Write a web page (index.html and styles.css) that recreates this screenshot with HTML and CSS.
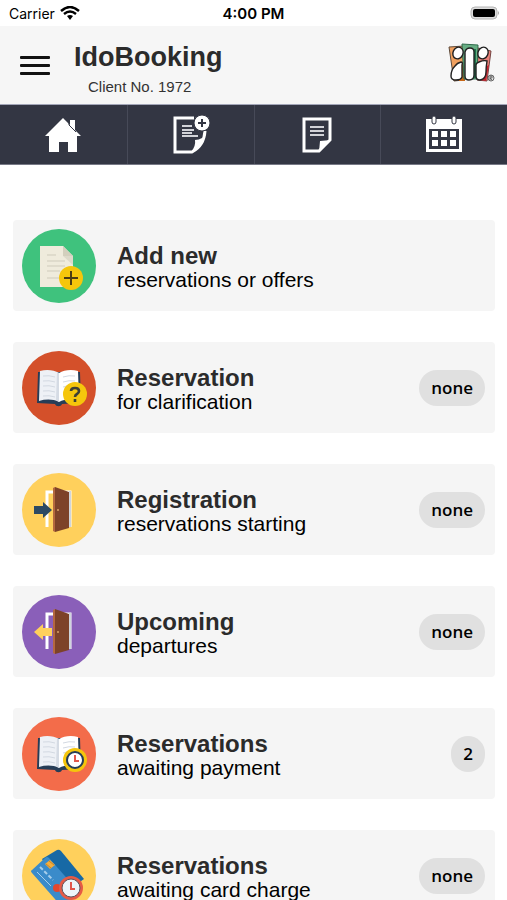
FILE: index.html
```html
<!DOCTYPE html>
<html lang="en">
<head>
    <meta charset="UTF-8">
    <meta name="viewport" content="width=device-width, initial-scale=1.0">
    <title>IdoBooking</title>
    <link rel="stylesheet" href="styles.css">
</head>
<body>

    <!-- shared drawings -->
    <svg class="defs" width="0" height="0" aria-hidden="true">
        <symbol id="book" viewBox="0 0 74 74">
            <path d="M16 21h42l1 31-19 1c-1 3-6 3-7 0l-18-1z" fill="#263d57"/>
            <path d="M18 20c7-2 14-1 19 2v29c-6-3-13-3-20-1z" fill="#eef1f6"/>
            <path d="M56 20c-7-2-14-1-19 2v29c6-3 13-3 20-1z" fill="#fff"/>
            <path d="M35 21l2 1v29l-3-2z" fill="#d5dbe4"/>
            <path d="M21 25q6-1 12 1M21 30q6-1 12 1M21 35q6-1 12 1M21 40q6-1 12 1M21 45q6-1 12 1M41 26q6-2 12-1M41 31q6-2 12-1M41 36q3-1 6-1" fill="none" stroke="#d3d9e2"/>
        </symbol>
        <symbol id="door" viewBox="0 0 74 74">
            <path d="M25 54V19h23v35" fill="none" stroke="#fff" stroke-width="3"/>
            <path d="M47 18h2v36h-2z" fill="#cfd4dc"/>
            <path d="M31 15l2-1v45l-2-1z" fill="#b4683f"/>
            <path d="M33 14l14 5v36l-14 4z" fill="#7d4229"/>
            <circle cx="36" cy="37" r="1" fill="#d9a066"/>
        </symbol>
    </svg>

    <div class="app">
        <div class="status">
            <div class="carrier">
                <span>Carrier</span>
                <svg width="20" height="14" viewBox="0 0 20 14" aria-hidden="true">
                    <path d="M1 5q9-8 18 0M4 8q6-5 12 0" fill="none" stroke="#000" stroke-width="2.4"/>
                    <path d="M7 10q3-2 6 0l-3 4z"/>
                </svg>
            </div>
            <div class="time">4:00 PM</div>
            <svg class="battery" width="30" height="14" viewBox="0 0 30 14" aria-hidden="true">
                <rect x="1" y="1" width="26" height="12" rx="4" fill="#ddd" stroke="#b5b5b5" stroke-width="1"/>
                <rect x="3" y="3" width="22" height="8" rx="2"/>
                <path d="M28 5q2 2 0 4z" fill="#aaa"/>
            </svg>
        </div>

        <header class="header">
            <button type="button" class="menu" aria-label="Menu">
                <span></span><span></span><span></span>
            </button>
            <div class="brand">
                <h1>IdoBooking</h1>
                <p>Client No. 1972</p>
            </div>
            <svg class="logo" width="48" height="40" viewBox="0 0 48 40" aria-hidden="true">
                <path d="M1 4l15-1-1 34-9 1z" fill="#efa05f" stroke="#5c4a3b"/>
                <path d="M30 5l13 3-4 30-10-1z" fill="#e88078" stroke="#754442"/>
                <path d="M33 26l8-4-3 16-6-1z" fill="#c5212d"/>
                <path d="M10 24l7-6v20h-6z" fill="#c76718"/>
                <path d="M14 1l16 1-1 34H16z" fill="#67ad83" stroke="#2f6b4b"/>
                <path d="M24 6h4v29h-4z" fill="#1d734b"/>
                <g fill="#fff" stroke="#222" stroke-width="1.4">
                    <ellipse cx="10" cy="10" rx="5" ry="6" transform="rotate(25 10 10)"/>
                    <ellipse cx="35" cy="10" rx="5" ry="6" transform="rotate(25 35 10)"/>
                    <path d="M17 9q1-4 5-4t4 4v23q0 5-5 5-4 0-4-4z"/>
                    <path d="M13 19q2 0 1 3v12q-1 3-6 3-5 0-5-4 0-6 4-10 2-3 6-4z"/>
                    <path d="M31 19q5-2 8-1-1 6-1 11 0 7-6 8-4 0-4-4V22q0-2 3-3z"/>
                </g>
                <circle cx="43" cy="35" r="3" fill="#ddd" stroke="#666"/>
                <path d="M42 37v-4h2v2h-2l2 2" fill="none" stroke="#555" stroke-width=".8"/>
            </svg>
        </header>

        <nav class="nav">
            <a href="#" aria-label="Home">
                <svg width="40" height="40" viewBox="0 0 40 40">
                    <path d="M20 3l7 7V5h5v10l6 6h-4v16H25V27h-9v10H6V21H2z" fill="#fff"/>
                    <path d="M26 5v5l7 7" fill="none" stroke="#333643"/>
                </svg>
            </a>
            <a href="#" aria-label="Add reservation">
                <svg width="40" height="40" viewBox="0 0 40 40">
                    <path d="M23 3H4v34h17q12-6 13-21" fill="none" stroke="#fff" stroke-width="3"/>
                    <path d="M35 18q-3 7-11 7 1 6-4 12 12-4 15-19z" fill="#fff"/>
                    <path d="M11 11h10M11 15h12M11 18h10M11 21h16" stroke="#d2d3d8" stroke-width="2"/>
                    <circle cx="31" cy="8" r="8" fill="#fff" stroke="#333643"/>
                    <path d="M31 4v8M27 8h8" stroke="#333643" stroke-width="2"/>
                </svg>
            </a>
            <a href="#" aria-label="Reservations">
                <svg width="40" height="40" viewBox="0 0 40 40">
                    <path d="M7 4h26v21l-11 11H7z" fill="none" stroke="#fff" stroke-width="3"/>
                    <path d="M34 25l-11 1-1 11z" fill="#fff"/>
                    <path d="M13 12h14M13 16h14M13 20h14" stroke="#d2d3d8" stroke-width="2"/>
                </svg>
            </a>
            <a href="#" aria-label="Calendar">
                <svg width="40" height="40" viewBox="0 0 40 40">
                    <path d="M2 4h36v33H2z" fill="#fff"/>
                    <path d="M5 14h30v20H5z" fill="#333643"/>
                    <path d="M8 16h6v6H8zM17 16h6v6h-6zM26 16h6v6h-6zM8 25h6v6H8zM17 25h6v6h-6zM26 25h6v6h-6z" fill="#fff"/>
                    <rect x="8" y="1" width="4" height="8" rx="2" fill="#fff" stroke="#333643"/>
                    <rect x="28" y="1" width="4" height="8" rx="2" fill="#fff" stroke="#333643"/>
                </svg>
            </a>
        </nav>

        <main class="list">
            <a class="card" href="#">
                <svg class="icon" viewBox="0 0 74 74" aria-hidden="true">
                    <circle cx="37" cy="37" r="37" fill="#3fc27d"/>
                    <path d="M18 17h23l10 10v31H18z" fill="#efebdc"/>
                    <path d="M41 17l10 10H41z" fill="#d3cfbd"/>
                    <path d="M41 27h10v9z" fill="#ddd9ca"/>
                    <path d="M25 26h9M25 32h18M25 37h18M25 42h13M25 49h12" stroke="#cfcbbb"/>
                    <circle cx="49" cy="49" r="12" fill="#f5c60c"/>
                    <path d="M49 42v14M42 49h14" stroke="#4b3c14" stroke-width="2"/>
                </svg>
                <div class="text">
                    <h2>Add new</h2>
                    <p>reservations or offers</p>
                </div>
            </a>

            <a class="card" href="#">
                <svg class="icon" viewBox="0 0 74 74" aria-hidden="true">
                    <circle cx="37" cy="37" r="37" fill="#d4502a"/>
                    <use href="#book"/>
                    <circle cx="53" cy="43" r="12" fill="#f5c60c"/>
                    <path d="M49 40q0-3 4-3t4 3q0 2-2 3-2 1-2 3M53 48v3" fill="none" stroke="#3d3f35" stroke-width="2.6"/>
                </svg>
                <div class="text">
                    <h2>Reservation</h2>
                    <p>for clarification</p>
                </div>
                <span class="badge">none</span>
            </a>

            <a class="card" href="#">
                <svg class="icon" viewBox="0 0 74 74" aria-hidden="true">
                    <circle cx="37" cy="37" r="37" fill="#ffd05c"/>
                    <use href="#door"/>
                    <path d="M12 33h9v-4l9 8-9 8v-4h-9z" fill="#2c4a63"/>
                </svg>
                <div class="text">
                    <h2>Registration</h2>
                    <p>reservations starting</p>
                </div>
                <span class="badge">none</span>
            </a>

            <a class="card" href="#">
                <svg class="icon" viewBox="0 0 74 74" aria-hidden="true">
                    <circle cx="37" cy="37" r="37" fill="#8a5fb9"/>
                    <use href="#door"/>
                    <path d="M30 33h-9v-4l-9 8 9 8v-4h9z" fill="#ffd05c"/>
                </svg>
                <div class="text">
                    <h2>Upcoming</h2>
                    <p>departures</p>
                </div>
                <span class="badge">none</span>
            </a>

            <a class="card" href="#">
                <svg class="icon" viewBox="0 0 74 74" aria-hidden="true">
                    <circle cx="37" cy="37" r="37" fill="#f36c4a"/>
                    <use href="#book"/>
                    <circle cx="53" cy="43" r="12" fill="#f5c60c"/>
                    <circle cx="53" cy="43" r="8" fill="#fff" stroke="#263d57" stroke-width="2"/>
                    <path d="M53 38v6h4" fill="none" stroke="#e2574c" stroke-width="2"/>
                </svg>
                <div class="text">
                    <h2>Reservations</h2>
                    <p>awaiting payment</p>
                </div>
                <span class="badge">2</span>
            </a>

            <a class="card" href="#">
                <svg class="icon" viewBox="0 0 74 74" aria-hidden="true">
                    <circle cx="37" cy="37" r="37" fill="#ffd05c"/>
                    <path d="M20 20l15-9q2-1 4 1l23 28-20 14z" fill="#1769a5"/>
                    <path d="M10 31l13-12q2-2 4 0l30 34-17 15L10 34q-2-2 0-3z" fill="#3a8bca"/>
                    <path d="M23 25l5-4 5 5-5 4z" fill="#f4ae3d"/>
                    <path d="M24 25l5 4M27 22l5 4" stroke="#c98528"/>
                    <path d="M18 28l13 13" stroke="#a6cdea" stroke-width="2" stroke-dasharray="4 2"/>
                    <path d="M15 33l14 14" stroke="#a6cdea"/>
                    <circle cx="35" cy="49" r="4" fill="#e2472f"/>
                    <circle cx="49" cy="49" r="12" fill="#e65a45"/>
                    <circle cx="49" cy="49" r="9" fill="#edf5f9" stroke="#5e5660"/>
                    <path d="M49 43v7h4" fill="none" stroke="#e2574c" stroke-width="2"/>
                </svg>
                <div class="text">
                    <h2>Reservations</h2>
                    <p>awaiting card charge</p>
                </div>
                <span class="badge">none</span>
            </a>
        </main>
    </div>

</body>
</html>
```
FILE: styles.css
```css
* {
    box-sizing: border-box;
}
body {
    margin: 0;
    font-family: "Liberation Sans", Arial, sans-serif;
    background-color: #fff;
    color: #000;
}
h1, h2, p {
    margin: 0;
}
.defs {
    position: absolute;
}
.app {
    display: flex;
    flex-direction: column;
    height: 100vh;
}
.status {
    display: grid;
    grid-template-columns: 1fr auto 1fr;
    align-items: center;
    flex-shrink: 0;
    height: 26px;
    padding: 0 7px;
    font-family: Inter, sans-serif;
    font-size: 14px;
}
.carrier {
    display: flex;
    align-items: center;
    gap: 5px;
    padding-left: 2px;
}
.time {
    font-size: 15px;
    font-weight: 600;
}
.battery {
    justify-self: end;
}
.header {
    display: flex;
    align-items: center;
    flex-shrink: 0;
    height: 79px;
    padding: 0 11px 0 20px;
    background-color: #f6f6f6;
    border-bottom: 1px solid #a3a6b8;
}
.menu {
    display: flex;
    flex-direction: column;
    gap: 5px;
    width: 30px;
    padding: 0;
    border: none;
    background: none;
    cursor: pointer;
}
.menu span {
    height: 3px;
    border-radius: 1px;
    background-color: #111;
}
.brand {
    flex: 1;
    padding: 11px 0 0 24px;
}
.brand h1 {
    font-size: 27px;
    line-height: 32px;
    color: #2b2b2b;
}
.brand p {
    padding-left: 14px;
    font-size: 15px;
    line-height: 28px;
    color: #333;
}
.logo {
    margin-bottom: 4px;
}
.nav {
    display: grid;
    grid-template-columns: repeat(4, 1fr);
    flex-shrink: 0;
    height: 60px;
    background-color: #333643;
    border-bottom: 1px solid #777986;
}
.nav a {
    display: flex;
    align-items: center;
    justify-content: center;
}
.nav a + a {
    border-left: 1px solid #474a58;
}
.list {
    display: flex;
    flex-direction: column;
    flex: 1;
    gap: 31px;
    padding: 55px 12px 31px 13px;
    overflow-y: auto;
    scrollbar-width: none;
}
.card {
    display: flex;
    align-items: center;
    flex-shrink: 0;
    min-height: 91px;
    padding: 0 10px 0 9px;
    border-radius: 4px;
    background-color: #f5f5f5;
    color: #000;
    text-decoration: none;
}
.icon {
    flex-shrink: 0;
    width: 74px;
    height: 74px;
}
.text {
    flex: 1;
    padding: 3px 0 0 21px;
}
.text h2 {
    font-size: 24px;
    line-height: 24px;
    color: #2b2b2b;
}
.text p {
    font-size: 21px;
    line-height: 23px;
}
.badge {
    padding: 0 12px;
    border-radius: 18px;
    background-color: #e0e0e0;
    font-family: "Open Sans", "Noto Sans", sans-serif;
    font-size: 17px;
    font-weight: 600;
    line-height: 36px;
}
```
